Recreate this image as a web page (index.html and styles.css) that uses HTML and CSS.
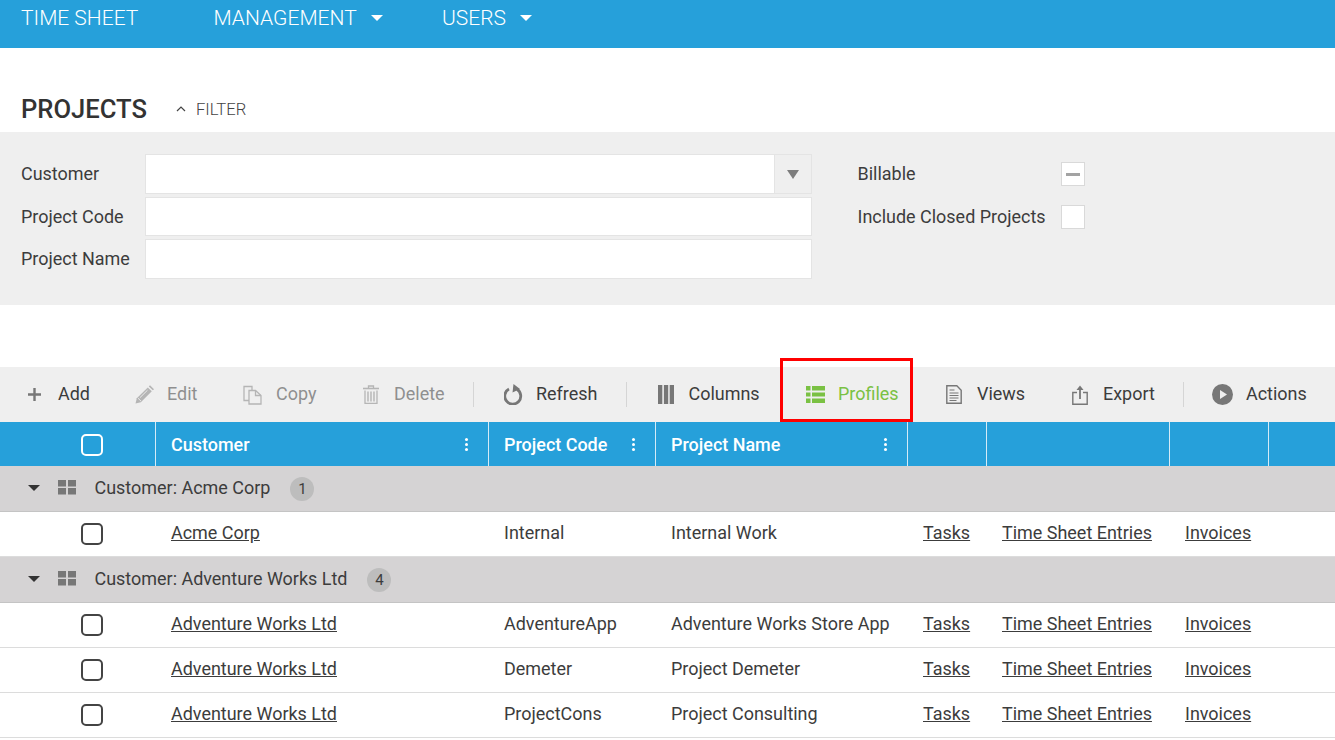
FILE: index.html
```html
<!DOCTYPE html>
<html lang="en">
<head>
<meta charset="utf-8">
<title>Projects</title>
<link rel="stylesheet" href="styles.css">
</head>
<body>
<header class="nav">
  <a class="nav-item nav-time">TIME SHEET</a>
  <a class="nav-item nav-man">MANAGEMENT<i class="caret"></i></a>
  <a class="nav-item">USERS<i class="caret"></i></a>
</header>
<div class="title-row">
  <h1 class="title">PROJECTS</h1>
  <svg class="chev" width="10" height="6" viewBox="0 0 10 6"><path d="M1 5l4-4 4 4" fill="none" stroke="#444" stroke-width="1.2"/></svg>
  <span class="filter-label">FILTER</span>
</div>
<section class="filter">
  <div class="f-col-left">
    <div class="f-row f-row-1">
      <label class="f-label">Customer</label>
      <div class="f-input f-combo"><span class="f-arrow"><i class="f-tri"></i></span></div>
    </div>
    <div class="f-row f-row-2">
      <label class="f-label">Project Code</label>
      <div class="f-input"></div>
    </div>
    <div class="f-row f-row-3">
      <label class="f-label">Project Name</label>
      <div class="f-input"></div>
    </div>
  </div>
  <div class="f-col-right">
    <div class="c-row c-row-1"><span class="c-label">Billable</span><span class="c-box"><i class="c-dash"></i></span></div>
    <div class="c-row"><span class="c-label">Include Closed Projects</span><span class="c-box"></span></div>
  </div>
</section>
<div class="toolbar">
  <div class="tb b-add"><svg class="ic" width="15" height="15" viewBox="0 0 15 15"><path d="M6.300 1h2.400v5.300H14v2.400H8.700V14H6.300V8.700H1V6.300h5.300z" fill="#777"/></svg><span>Add</span></div>
  <div class="tb off b-edit"><svg class="ic" width="20" height="19" viewBox="0 0 20 19"><path d="M.5 18.500l1.300-5.300L12.800 2.400l4 3.900L5.800 17.200z" fill="#b5b5b5"/><path d="M13.800 1.400L15 .3l4 3.900-1.200 1.100z" fill="#b5b5b5"/><path d="M3 13.200l3 2.900M4.800 12.800L12.500 5.200" stroke="#efefef" stroke-width=".9"/></svg><span>Edit</span></div>
  <div class="tb off b-copy"><svg class="ic" width="20" height="20" viewBox="0 0 20 20"><path d="M6 15.500H1V1.500h8V5" fill="none" stroke="#b5b5b5" stroke-width="1.300"/><path d="M6 5.500h6.500l5.500 5V19H6z" fill="none" stroke="#b5b5b5" stroke-width="1.300"/><path d="M12.500 5.500v5H18" fill="none" stroke="#b5b5b5" stroke-width="1.300"/></svg><span>Copy</span></div>
  <div class="tb off b-del"><svg class="ic" width="16" height="19" viewBox="0 0 16 19"><path d="M0 3.500h16" stroke="#b5b5b5" stroke-width="1.600"/><path d="M5.500 3V1h5v2" fill="none" stroke="#b5b5b5" stroke-width="1.300"/><path d="M2 5.500v13h12v-13" fill="none" stroke="#b5b5b5" stroke-width="1.300"/><path d="M5 6.500v10M8 6.500v10M11 6.500v10" stroke="#b5b5b5" stroke-width="1.400"/></svg><span>Delete</span></div>
  <i class="sep s1"></i>
  <div class="tb b-ref"><svg class="ic" width="20" height="21" viewBox="0 0 20 21"><path d="M13 5.300A8 8 0 1 1 5 5" fill="none" stroke="#777" stroke-width="2.800"/><path d="M9.500 0L16 5 8.500 8.500z" fill="#777"/></svg><span>Refresh</span></div>
  <i class="sep s2"></i>
  <div class="tb b-col"><svg class="ic" width="16" height="19" viewBox="0 0 16 19"><path d="M0 0h4.300v19H0zM5.900 0h4.300v19H5.900zM11.700 0H16v19h-4.300z" fill="#777"/></svg><span>Columns</span></div>
  <div class="tb on b-pro"><svg class="ic" width="19" height="17" viewBox="0 0 19 17"><path d="M0 0h4.500v4.600H0zM6 0h13v4.600H6zM0 6.500h4.500v4H0zM6 6.500h13v4H6zM0 12.400h4.500V17H0zM6 12.400h13V17H6z" fill="#7ac143"/></svg><span>Profiles</span></div>
  <div class="tb b-vie"><svg class="ic" width="16" height="19" viewBox="0 0 16 19"><path d="M.8.800h10l4.400 4.400v13H.8z" fill="none" stroke="#777" stroke-width="1.400"/><path d="M3.500 5h5M3.500 8h9M3.500 10.500h9M3.500 13h9M3.500 15.500h7" stroke="#777" stroke-width="1.200"/></svg><span>Views</span></div>
  <div class="tb b-exp"><svg class="ic" width="16" height="20" viewBox="0 0 16 20"><path d="M5 7.500H.8v11.700h14.400V7.500H11" fill="none" stroke="#777" stroke-width="1.400"/><path d="M8 14V3" stroke="#777" stroke-width="1.800"/><path d="M4.500 5L8 .5 11.500 5z" fill="#777"/></svg><span>Export</span></div>
  <i class="sep s3"></i>
  <div class="tb b-act"><svg class="ic" width="21" height="21" viewBox="0 0 21 21"><circle cx="10.500" cy="10.500" r="10.500" fill="#777"/><path d="M8 6l7 4.500L8 15z" fill="#efefef"/></svg><span>Actions</span></div>
</div>
<div class="grid">
  <div class="cols head">
    <div class="cell cb"><i class="box white"></i></div>
    <div class="cell"><span>Customer</span><i class="dots"></i></div>
    <div class="cell"><span>Project Code</span><i class="dots"></i></div>
    <div class="cell"><span>Project Name</span><i class="dots"></i></div>
    <div class="cell"></div><div class="cell"></div><div class="cell"></div><div class="cell last"></div>
  </div>
  <div class="group"><i class="g-tri"></i><svg class="g-ic" width="18" height="15" viewBox="0 0 18 15"><path d="M0 0h8v6.500H0zM10 0h8v6.500h-8zM0 8h8v6.500H0zM10 8h8v6.500h-8z" fill="#777"/></svg><span class="g-text">Customer: Acme Corp</span><b class="count">1</b></div>
  <div class="cols row"><div class="cell cb"><i class="box"></i></div><div class="cell"><a>Acme Corp</a></div><div class="cell">Internal</div><div class="cell">Internal Work</div><div class="cell"><a>Tasks</a></div><div class="cell"><a>Time Sheet Entries</a></div><div class="cell"><a>Invoices</a></div><div class="cell"></div></div>
  <div class="group"><i class="g-tri"></i><svg class="g-ic" width="18" height="15" viewBox="0 0 18 15"><path d="M0 0h8v6.500H0zM10 0h8v6.500h-8zM0 8h8v6.500H0zM10 8h8v6.500h-8z" fill="#777"/></svg><span class="g-text">Customer: Adventure Works Ltd</span><b class="count">4</b></div>
  <div class="cols row"><div class="cell cb"><i class="box"></i></div><div class="cell"><a>Adventure Works Ltd</a></div><div class="cell">AdventureApp</div><div class="cell">Adventure Works Store App</div><div class="cell"><a>Tasks</a></div><div class="cell"><a>Time Sheet Entries</a></div><div class="cell"><a>Invoices</a></div><div class="cell"></div></div>
  <div class="cols row"><div class="cell cb"><i class="box"></i></div><div class="cell"><a>Adventure Works Ltd</a></div><div class="cell">Demeter</div><div class="cell">Project Demeter</div><div class="cell"><a>Tasks</a></div><div class="cell"><a>Time Sheet Entries</a></div><div class="cell"><a>Invoices</a></div><div class="cell"></div></div>
  <div class="cols row"><div class="cell cb"><i class="box"></i></div><div class="cell"><a>Adventure Works Ltd</a></div><div class="cell">ProjectCons</div><div class="cell">Project Consulting</div><div class="cell"><a>Tasks</a></div><div class="cell"><a>Time Sheet Entries</a></div><div class="cell"><a>Invoices</a></div><div class="cell"></div></div>
</div>
<div class="highlight"></div>
</body>
</html>
```

FILE: styles.css
```css
* { box-sizing: border-box; }
html, body { margin: 0; padding: 0; height: 740px; overflow: hidden; background: #fff; }
body { position: relative; font-family: Roboto, "Liberation Sans", sans-serif; font-size: 17.970px; color: #3c3c3c; }

.nav { height: 48px; background: #26a0da; display: flex; padding: 6px 0 0 21px; color: #fff; font-weight: 300; font-size: 21px; line-height: 24px; }
.nav-item { display: flex; align-items: center; height: 24px; }
.nav-time { width: 192.500px; }
.nav-man { width: 228.500px; }
.caret { width: 0; height: 0; margin-left: 14px; border: 6px solid transparent; border-top: 6px solid #fff; border-bottom: 0; }

.title-row { height: 84px; display: flex; align-items: center; padding: 38px 0 0 21px; }
.title { margin: 0; font-size: 25.600px; font-weight: 500; color: #333; line-height: 46px; width: 155px; }
.chev { margin-right: 10px; }
.filter-label { font-size: 16.640px; font-weight: 300; color: #444; }

.filter { height: 173px; background: #efefef; display: flex; padding: 22px 0 0 21px; }
.f-col-left { width: 791px; }
.f-row { display: flex; align-items: center; }
.f-row-1 { height: 40px; margin-bottom: 3px; }
.f-row-2 { height: 39px; margin-bottom: 3px; }
.f-row-3 { height: 40px; }
.f-label { width: 124px; padding-bottom: 2px; }
.f-row-2 .f-label { padding-bottom: 0; }
.f-input { width: 667px; height: 100%; background: #fff; border: 1px solid #e4e4e4; display: flex; justify-content: flex-end; }
.f-arrow { width: 37px; background: #efefef; border-left: 1px solid #e4e4e4; display: flex; align-items: center; justify-content: center; }
.f-tri { width: 0; height: 0; border: 6px solid transparent; border-top: 9px solid #7d7d7d; border-bottom: 0; }
.f-col-right { padding-left: 45.500px; }
.c-row { display: flex; align-items: center; height: 24px; margin-top: 8px; }
.c-row-1 { margin-bottom: 19px; }
.c-label { width: 203.500px; padding-bottom: 2px; }
.c-box { width: 24px; height: 24px; background: #fff; border: 1px solid #d9d9d9; display: flex; align-items: center; justify-content: center; }
.c-dash { width: 14px; height: 3px; background: #a3a3a3; }

.toolbar { margin-top: 62px; height: 55px; background: #efefef; display: flex; align-items: center; }
.tb { display: flex; align-items: center; }
.tb span { padding-bottom: 2px; }
.ic { flex: none; }
.off { color: #8f8f8f; }
.on { color: #7ac143; }
.b-add { margin-left: 27px; width: 108px; } .b-add .ic { margin-right: 16px; }
.b-edit { width: 108px; } .b-edit .ic { margin-right: 12px; }
.b-copy { width: 120px; } .b-copy .ic { margin-right: 13px; }
.b-del { width: 110px; } .b-del .ic { margin-right: 15px; }
.sep { width: 1px; height: 25px; background: #d5d5d5; flex: none; }
.b-ref { margin-left: 30px; width: 122px; } .b-ref .ic { margin-right: 12px; }
.b-col { margin-left: 31px; width: 148px; } .b-col .ic { margin-right: 14.500px; }
.b-pro { width: 140px; } .b-pro .ic { margin-right: 13px; }
.b-vie { width: 126px; } .b-vie .ic { margin-right: 15px; }
.b-exp { width: 111px; } .b-exp .ic { margin-right: 15px; }
.b-act { margin-left: 28px; } .b-act .ic { margin-right: 13px; }

.cols { display: grid; grid-template-columns: 156px 333px 167px 252px 79px 183px 99px 66px; }
.head { height: 44px; background: #26a0da; color: #fff; font-weight: 500; }
.head .cell { border-right: 1px solid #d4ebf7; justify-content: space-between; padding-right: 20px; }
.head .last { border-right: 0; }
.cell { display: flex; align-items: center; padding-left: 15px; min-width: 0; white-space: nowrap; }
.row .cell { padding-bottom: 3px; }
.head .cb { padding: 2px 0 0 81px; }
.row .cb { padding: 0 0 0 81px; }
.box { width: 22px; height: 22px; border: 2px solid #444; border-radius: 5px; display: block; background: #fff; }
.box.white { border-color: #fff; background: transparent; }
.dots { width: 3px; height: 3px; background: #fff; border-radius: 50%; box-shadow: 0 -5px 0 #fff, 0 5px 0 #fff; }

.group { height: 46px; background: #d5d3d4; border-bottom: 1px solid #c4c4c4; display: flex; align-items: center; padding-left: 28px; }
.g-tri { width: 0; height: 0; border: 6px solid transparent; border-top: 6px solid #333; border-bottom: 0; margin: -2px 17.500px 0 0; }
.g-ic { margin: -3px 19px 0 0; }
.g-text { padding-bottom: 2px; }
.count { width: 24px; height: 24px; margin-left: 20px; border-radius: 50%; background: #bdbdbd; font-weight: 400; font-size: 15px; display: flex; align-items: center; justify-content: center; }
.row { height: 45px; border-bottom: 1px solid #dcdcdc; background: #fff; }
.row a { text-decoration: underline; color: #3c3c3c; }

.highlight { position: absolute; left: 780px; top: 358px; width: 133px; height: 64px; border: 3px solid #f00; }
```
